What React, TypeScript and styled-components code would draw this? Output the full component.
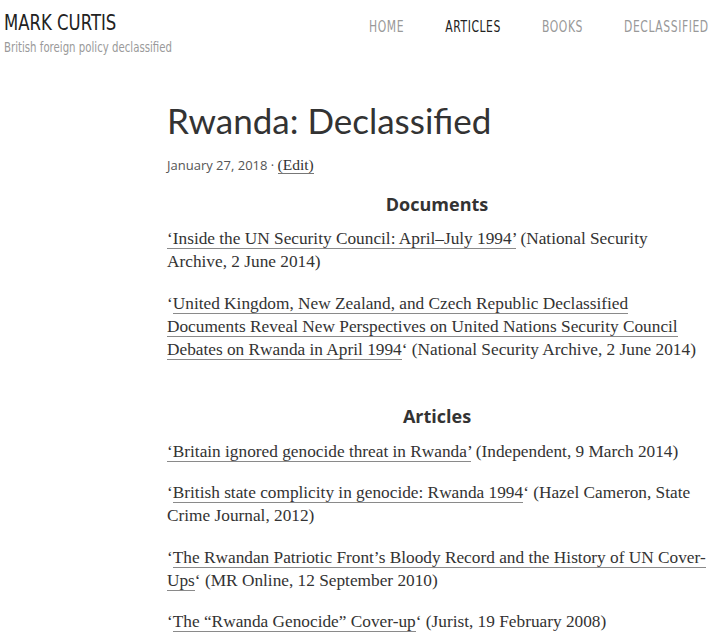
import React from "react";
import styled, { createGlobalStyle } from "styled-components";

const Global = createGlobalStyle`
  html, body { margin: 0; padding: 0; background: #fff; }
  body { color: #333; }
`;

const Page = styled.div`
  display: flex;
  flex-direction: column;
`;

const Header = styled.header`
  display: flex;
  justify-content: space-between;
  align-items: flex-start;
  padding: 8px 7px 0 4px;
`;

const Brand = styled.div`
  display: flex;
  flex-direction: column;
  align-items: flex-start;
`;

/* the site uses a condensed display face; emulate it by narrowing DejaVu Sans */
const Squeeze = styled.span<{ $scale: number; $origin?: string }>`
  display: inline-block;
  transform: scaleX(${(p) => p.$scale});
  transform-origin: ${(p) => p.$origin ?? "left"} center;
  white-space: nowrap;
`;

const SiteTitle = styled.a`
  font-family: "DejaVu Sans", sans-serif;
  font-size: 22px;
  line-height: 28px;
  color: #222;
  text-decoration: none;
  margin-top: 1px;
`;

const Tagline = styled.div`
  font-family: "DejaVu Sans", sans-serif;
  font-size: 14px;
  line-height: 18px;
  color: #9a9a9a;
  margin-top: 1px;
`;

const Nav = styled.nav`
  display: flex;
  gap: 57px;
  padding-top: 10px;
`;

const NavItem = styled.a<{ $active?: boolean }>`
  font-family: "DejaVu Sans", sans-serif;
  font-size: 15px;
  letter-spacing: 0.8px;
  line-height: 18px;
  color: ${(p) => (p.$active ? "#222" : "#999")};
  text-decoration: none;
`;

const Main = styled.main`
  width: 540px;
  margin: 0 0 0 167px;
  padding-top: 42px;
`;

const Title = styled.h1`
  font-family: Lato, "Open Sans", sans-serif;
  font-weight: 400;
  font-size: 35px;
  line-height: 44px;
  color: #333;
  margin: 0;
`;

const Meta = styled.div`
  font-family: "Open Sans", sans-serif;
  font-size: 13px;
  color: #555;
  margin-top: 13px;
  line-height: 20px;
`;

const EditLink = styled.a`
  font-family: "Liberation Serif", serif;
  font-size: 15.5px;
  color: #333;
  text-decoration: none;
  border-bottom: 1px solid #777;
`;

const SectionHeading = styled.h2`
  font-family: "Open Sans", sans-serif;
  font-weight: 700;
  font-size: 18px;
  line-height: 24px;
  text-align: center;
  color: #333;
  margin: 0 0 11px 0;
`;

const Section = styled.section<{ $top: number; $gap?: number }>`
  margin-top: ${(p) => p.$top}px;
  & > ${SectionHeading} {
    margin-bottom: ${(p) => p.$gap ?? 11}px;
  }
`;

const Para = styled.p`
  font-family: "Liberation Serif", serif;
  font-size: 17.3px;
  line-height: 23px;
  color: #333;
  margin: 0 0 18.5px 0;
`;

const Link = styled.a`
  color: #333;
  text-decoration: none;
  border-bottom: 1px solid #8a8a8a;
`;

type Item = { pre: string; link: string; post: string };

const docs: Item[] = [
  {
    pre: "",
    link: "‘Inside the UN Security Council: April–July 1994’",
    post: " (National Security Archive, 2 June 2014)",
  },
  {
    pre: "‘",
    link:
      "United Kingdom, New Zealand, and Czech Republic Declassified Documents Reveal New Perspectives on United Nations Security Council Debates on Rwanda in April 1994",
    post: "‘ (National Security Archive, 2 June 2014)",
  },
];

const articles: Item[] = [
  {
    pre: "",
    link: "‘Britain ignored genocide threat in Rwanda’",
    post: " (Independent, 9 March 2014)",
  },
  {
    pre: "‘",
    link: "British state complicity in genocide: Rwanda 1994",
    post: "‘ (Hazel Cameron, State Crime Journal, 2012)",
  },
  {
    pre: "‘",
    link: "The Rwandan Patriotic Front’s Bloody Record and the History of UN Cover-Ups",
    post: "‘ (MR Online, 12 September 2010)",
  },
  {
    pre: "‘",
    link: "The “Rwanda Genocide” Cover-up",
    post: "‘ (Jurist, 19 February 2008)",
  },
];

const renderItems = (items: Item[]) =>
  items.map((it, i) => (
    <Para key={i}>
      {it.pre}
      <Link href="#">{it.link}</Link>
      {it.post}
    </Para>
  ));

export default function App() {
  return (
    <Page>
      <Global />
      <Header>
        <Brand>
          <SiteTitle href="#">
            <Squeeze $scale={0.75}>MARK CURTIS</Squeeze>
          </SiteTitle>
          <Tagline>
            <Squeeze $scale={0.727}>British foreign policy declassified</Squeeze>
          </Tagline>
        </Brand>
        <Squeeze $scale={0.72} $origin="right">
          <Nav>
            <NavItem href="#">HOME</NavItem>
            <NavItem href="#" $active>
              ARTICLES
            </NavItem>
            <NavItem href="#">BOOKS</NavItem>
            <NavItem href="#">DECLASSIFIED</NavItem>
          </Nav>
        </Squeeze>
      </Header>
      <Main>
        <Title>Rwanda: Declassified</Title>
        <Meta>
          January 27, 2018 · <EditLink href="#">(Edit)</EditLink>
        </Meta>
        <Section $top={17}>
          <SectionHeading>Documents</SectionHeading>
          {renderItems(docs)}
        </Section>
        <Section $top={43} $gap={12}>
          <SectionHeading>Articles</SectionHeading>
          {renderItems(articles)}
        </Section>
      </Main>
    </Page>
  );
}
